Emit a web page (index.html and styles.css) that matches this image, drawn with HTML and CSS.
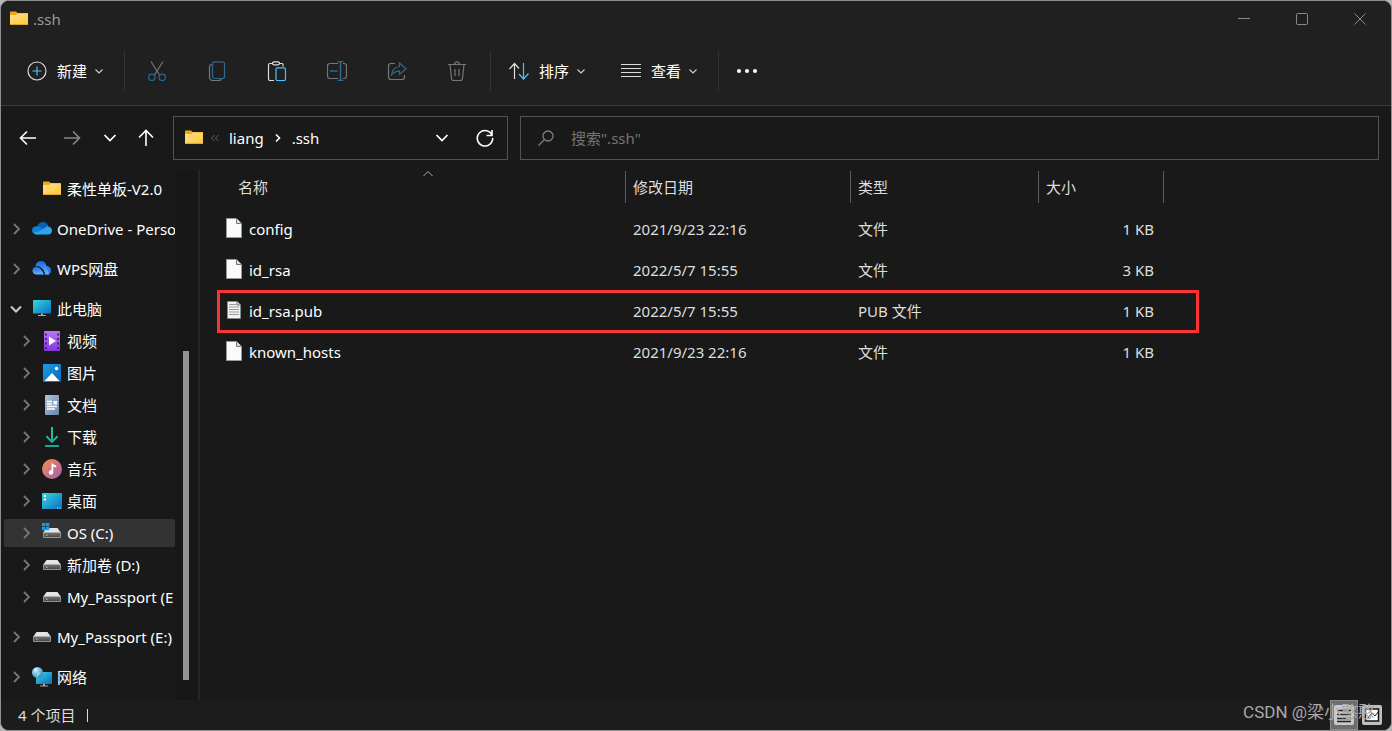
FILE: index.html
```html
<!DOCTYPE html>
<html lang="zh-CN">
<head>
<meta charset="utf-8">
<title>.ssh</title>
<link rel="stylesheet" href="styles.css">
</head>
<body>
<svg class="defs" aria-hidden="true">
  <defs>
    <linearGradient id="gFolder" x1="0" y1="0" x2="1" y2="1"><stop offset="0" stop-color="#ffe08a"/><stop offset="1" stop-color="#fbc63a"/></linearGradient>
    <linearGradient id="gScreen" x1="0" y1="0" x2="1" y2="1"><stop offset="0" stop-color="#37d6de"/><stop offset="1" stop-color="#0a6fc4"/></linearGradient>
    <linearGradient id="gVideo" x1="0" y1="0" x2="0" y2="1"><stop offset="0" stop-color="#b977f5"/><stop offset="1" stop-color="#8038dd"/></linearGradient>
    <linearGradient id="gPic" x1="0" y1="0" x2="1" y2="1"><stop offset="0" stop-color="#1c9fe8"/><stop offset="1" stop-color="#0765b8"/></linearGradient>
    <linearGradient id="gDoc" x1="0" y1="0" x2="1" y2="1"><stop offset="0" stop-color="#b4c6da"/><stop offset="1" stop-color="#6686a8"/></linearGradient>
    <linearGradient id="gMusic" x1="0" y1="0" x2="1" y2="1"><stop offset="0" stop-color="#f58f4c"/><stop offset="1" stop-color="#a55ab8"/></linearGradient>
    <linearGradient id="gDown" x1="0" y1="0" x2="0" y2="1"><stop offset="0" stop-color="#2fc48d"/><stop offset="1" stop-color="#14a89c"/></linearGradient>
    <linearGradient id="gDrive" x1="0" y1="0" x2="0" y2="1"><stop offset="0" stop-color="#777"/><stop offset="1" stop-color="#444"/></linearGradient>
    <linearGradient id="gWps" x1="0" y1="0" x2="0" y2="1"><stop offset="0" stop-color="#1266ee"/><stop offset="1" stop-color="#69b4ff"/></linearGradient>
    <radialGradient id="gGlobe" cx=".35" cy=".3" r=".8"><stop offset="0" stop-color="#c9efff"/><stop offset="1" stop-color="#2280b8"/></radialGradient>
    <symbol id="folder" viewBox="0 0 20 20"><path d="M1 3q0-.5.5-.5H7l1.500 1.500h10q.5 0 .5.500V16H1z" fill="#f0a818"/><path d="M1 6h6L8.500 4.500H19V16H1z" fill="url(#gFolder)"/><path d="M1 15.500h18" stroke="#e5a52d"/></symbol>
    <symbol id="chev" viewBox="0 0 12 12"><path d="M2.500 4.500 6 8l3.500-3.500" fill="none" stroke="currentColor" stroke-width="1.200"/></symbol>
    <symbol id="chevBig" viewBox="0 0 14 14"><path d="M1.500 4 7 9.500 12.500 4" fill="none" stroke="currentColor" stroke-width="1.700"/></symbol>
    <symbol id="right" viewBox="0 0 12 14"><path d="M4 2l5 5-5 5" fill="none" stroke="currentColor" stroke-width="1.800"/></symbol>
    <symbol id="drive" viewBox="0 0 20 20"><path d="M4.500 5h11l3.500 5H1z" fill="#e4e4e6"/><path d="M1.500 9.500h17V14.500h-17z" fill="url(#gDrive)" stroke="#aaa" stroke-width=".8"/><path d="M4 11.500h1.500v1.500H4z" fill="#3ee04a"/></symbol>
    <symbol id="file" viewBox="0 0 16 20"><path d="M.5.500h10l5 5v14H.5z" fill="#fafafa" stroke="#999"/><path d="M10.500.500v5h5" fill="#ddd" stroke="#777"/></symbol>
  </defs>
</svg>

<div class="window">
  <header class="titlebar">
    <div class="title"><svg class="i20"><use href="#folder"/></svg><span>.ssh</span></div>
    <div class="caption">
      <button aria-label="最小化"><svg class="i14" viewBox="0 0 14 14"><path d="M1 6.500h12"/></svg></button>
      <button aria-label="最大化"><svg class="i14" viewBox="0 0 14 14"><rect x="1.500" y="1.500" width="11" height="11" rx="1"/></svg></button>
      <button aria-label="关闭"><svg class="i14" viewBox="0 0 14 14"><path d="M1.500 1.500l11 11M12.500 1.500l-11 11"/></svg></button>
    </div>
  </header>

  <div class="toolbar">
    <button class="cmd"><svg class="i20" viewBox="0 0 20 20"><circle cx="10" cy="10" r="9" stroke="#ddd"/><path d="M10 5.500v9M5.500 10h9" stroke="#4cc2ff"/></svg><span>新建</span><svg class="i12"><use href="#chev"/></svg></button>
    <span class="sep"></span>
    <div class="tools">
      <button aria-label="剪切"><svg class="i20" viewBox="0 0 20 20"><path d="M4 .5l8.500 13.500M16 .5 7.500 14" stroke="#777"/><circle cx="4.800" cy="16.300" r="3.200" stroke="#2c6a8c"/><circle cx="15.200" cy="16.300" r="3.200" stroke="#2c6a8c"/></svg></button>
      <button aria-label="复制"><svg class="i20" viewBox="0 0 20 20"><path d="M5 3.500q-2.500 0-2.500 2.500v10q0 3.500 3.500 3.500h6q2 0 2.500-2" stroke="#777"/><rect x="5.500" y=".8" width="12" height="16.700" rx="2" stroke="#2c6a8c"/></svg></button>
      <button aria-label="粘贴"><svg class="i20" viewBox="0 0 20 20"><path d="M5.500 2.500H3q-1.500 0-1.500 1.500v14q0 1.500 1.500 1.500h4M12.500 2.500H15q1 0 1 1v2" stroke="#ddd"/><rect x="5.500" y=".8" width="7" height="3" rx="1.500" stroke="#ddd"/><rect x="9" y="6.800" width="9.500" height="12.700" rx="1.500" stroke="#4cc2ff"/></svg></button>
      <button aria-label="重命名"><svg class="i20" viewBox="0 0 20 20"><path d="M11 2.500H3q-2.500 0-2.500 2.500v10q0 2.500 2.500 2.500h8M16 2.500h1q2.500 0 2.500 2.500v10q0 2.500-2.500 2.500h-1" stroke="#777"/><path d="M13.500.500v19M10.500.500h6M10.500 19.500h6M3 10h7.500" stroke="#2c6a8c" stroke-width="1.500"/></svg></button>
      <button aria-label="共享"><svg class="i20" viewBox="0 0 20 20"><path d="M8 2.500H4Q1.500 2.500 1.500 5v11q0 2.500 2.500 2.500h11q2.500 0 2.500-2.500v-2" stroke="#777"/><path d="M12.500 2l6.500 5.800-6.500 5.700v-3.300q-5 0-8 3.800 .8-7.500 8-8.500z" stroke="#2c6a8c"/></svg></button>
      <button aria-label="删除"><svg class="i20" viewBox="0 0 20 20"><path d="M1 3.500h18M7.500 3.500Q8 .8 10 .8t2.500 2.700M3 3.500l1.500 14q.2 2 2 2h7q1.800 0 2-2L17 3.500M8 8v7M12 8v7" stroke="#777"/></svg></button>
    </div>
    <span class="sep"></span>
    <button class="cmd"><svg class="i20" viewBox="0 0 20 20"><path d="M5.500 18V3M.5 8l5-5.500L10 7.500" stroke="#ddd"/><path d="M14.500 2v16M10 13l4.500 5 5-5.500" stroke="#4cc2ff"/></svg><span>排序</span><svg class="i12"><use href="#chev"/></svg></button>
    <button class="cmd"><svg class="i20" viewBox="0 0 20 20"><path d="M0 3.500h20M0 7.500h20M0 11.500h20M0 15.500h20" stroke="#ddd"/></svg><span>查看</span><svg class="i12"><use href="#chev"/></svg></button>
    <span class="sep"></span>
    <button class="more" aria-label="更多"><svg class="i20" viewBox="0 0 20 20"><g fill="#fff" stroke="none"><circle cx="2" cy="10" r="2"/><circle cx="10" cy="10" r="2"/><circle cx="18" cy="10" r="2"/></g></svg></button>
  </div>

  <div class="navbar">
    <div class="arrows">
      <button aria-label="后退"><svg class="i20" viewBox="0 0 20 20"><path d="M18 10H3M9 3.500 2.500 10 9 16.500"/></svg></button>
      <button class="dim" aria-label="前进"><svg class="i20" viewBox="0 0 20 20"><path d="M2 10h15M11 3.500l6.500 6.500-6.500 6.500"/></svg></button>
      <button class="narrow" aria-label="最近浏览的位置"><svg class="i14"><use href="#chevBig"/></svg></button>
      <button class="mid" aria-label="上移"><svg class="i20" viewBox="0 0 20 20"><path d="M10 18V3M3 9.500 10 2.500l7 7"/></svg></button>
    </div>
    <div class="address">
      <svg class="i20"><use href="#folder"/></svg>
      <svg class="dbl" viewBox="0 0 10 10"><path d="M4.500 2 1.500 5l3 3M8.500 2l-3 3 3 3" stroke="#666"/></svg>
      <a href="#liang">liang</a>
      <svg class="crumb" viewBox="0 0 12 14"><path d="M4 3.500 7.500 7 4 10.500" fill="none" stroke="#fff" stroke-width="1.600"/></svg>
      <a href="#ssh">.ssh</a>
      <span class="grow"></span>
      <button aria-label="历史记录"><svg class="i14"><use href="#chevBig"/></svg></button>
      <button aria-label="刷新"><svg class="i20" viewBox="0 0 20 20"><path d="M17.200 7.500A7.700 7.700 0 1 0 17.700 10M17 2v5.500h-5.500"/></svg></button>
    </div>
    <label class="search"><svg class="i16" viewBox="0 0 16 16"><circle cx="10" cy="6" r="5"/><path d="M6.500 9.500.5 15.500"/></svg><input type="text" aria-label="搜索" placeholder='搜索".ssh"'></label>
  </div>

  <div class="body">
    <nav class="tree">
      <button class="sub"><svg class="tw"></svg><svg class="i20"><use href="#folder"/></svg><span>柔性单板-V2.0</span></button>
      <button class="gap"><svg class="tw"><use href="#right"/></svg><svg class="i20" viewBox="0 0 20 20"><path d="M5 8q1.500-5 6-5 4 0 5.500 4.500L10 12z" fill="#0a5fb4"/><path d="M4.500 15.500Q0 15 0 11.300 .5 7.500 4.500 7.300q2.500-.3 5 1.700l6 5.500z" fill="#1280d8"/><path d="M8 12l7-4.800q5 .3 5 4.500-.3 3.800-4 3.800H4.500q-2-.2-3-1.500z" fill="#2ba4ee"/></svg><span>OneDrive - Perso</span></button>
      <button class="gap"><svg class="tw"><use href="#right"/></svg><svg class="i20" viewBox="0 0 20 20"><path d="M13 7q5.500-.7 6 4.500-.3 4-4 4h-3z" fill="#2d80ea"/><path d="M3.500 7.500Q4 2 9 2q4.500 0 5.500 5l2.500 8.500h-3.500Q11 7 3.500 7.500z" fill="url(#gWps)"/><path d="M4 15.500Q.5 15 .5 11.500T5 7.500q4 .5 7 8z" fill="url(#gWps)"/><path d="M4.500 7.300q5 0 8.500 8" fill="none" stroke="#1a1a1a"/></svg><span>WPS网盘</span></button>
      <button class="gap open"><svg class="tw" viewBox="0 0 12 14"><path d="M1 4.500l5 5 5-5" fill="none" stroke="currentColor" stroke-width="2"/></svg><svg class="i20" viewBox="0 0 20 20"><rect x="1" y="1" width="18" height="13.500" rx=".5" fill="url(#gScreen)"/><path d="M9 14.500h2V16h3v1H6v-1h3z" fill="#aaa"/></svg><span>此电脑</span></button>
      <button class="sub"><svg class="tw"><use href="#right"/></svg><svg class="i20" viewBox="0 0 20 20"><rect x="2" width="16" height="20" rx="1" fill="url(#gVideo)"/><path d="M4 2.500v16M16 2.500v16" stroke="#4b2185" stroke-width="2" stroke-dasharray="2 2.500"/><path d="M7 5.500v9l7-4.500z" fill="#fff"/></svg><span>视频</span></button>
      <button class="sub"><svg class="tw"><use href="#right"/></svg><svg class="i20" viewBox="0 0 20 20"><rect x="1" y="1" width="18" height="18" rx="1" fill="url(#gPic)"/><path d="M2.500 18 10 10l7.500 8z" fill="#fff"/><circle cx="14.500" cy="5.500" r="1.700" fill="#fff"/></svg><span>图片</span></button>
      <button class="sub"><svg class="tw"><use href="#right"/></svg><svg class="i20" viewBox="0 0 20 20"><rect x="3" width="14" height="20" rx="1" fill="url(#gDoc)"/><path d="M5 6.500h5M5 9h5M5 11.500h10M5 14h8" stroke="#fff" stroke-width="1.300"/><path d="M11.500 6H15v3.500h-3.500z" fill="#fff"/></svg><span>文档</span></button>
      <button class="sub"><svg class="tw"><use href="#right"/></svg><svg class="i20" viewBox="0 0 20 20"><path d="M9 0h2v12.500l4-4 1.300 1.500-6.300 6.200L3.700 10 5 8.500l4 4zM3 18h14v2H3z" fill="url(#gDown)"/></svg><span>下载</span></button>
      <button class="sub"><svg class="tw"><use href="#right"/></svg><svg class="i20" viewBox="0 0 20 20"><circle cx="10" cy="10" r="10" fill="url(#gMusic)"/><circle cx="9" cy="13.500" r="2.200" fill="#fff"/><path d="M9.500 4.500h1.500q1 2 3.200 2v1.800q-2 0-3-.8v6H9.500z" fill="#fff"/></svg><span>音乐</span></button>
      <button class="sub"><svg class="tw"><use href="#right"/></svg><svg class="i20" viewBox="0 0 20 20"><rect y="2" width="20" height="16" rx=".7" fill="url(#gScreen)"/><path d="M2 4h2v2H2zM2 7.500h2v2H2zM15 16.500h1v1h-1zM17.500 16.500h1v1h-1z" fill="#fff"/></svg><span>桌面</span></button>
      <button class="sub selected"><svg class="tw"><use href="#right"/></svg><svg class="i20" viewBox="0 0 20 20"><use href="#drive" width="20" height="20"/><path d="M0 0h3.300v3.300H0zM4 0h3.300v3.300H4zM0 4h3.300v3.300H0zM4 4h3.300v3.300H4z" fill="#159be8"/></svg><span>OS (C:)</span></button>
      <button class="sub"><svg class="tw"><use href="#right"/></svg><svg class="i20"><use href="#drive"/></svg><span>新加卷 (D:)</span></button>
      <button class="sub"><svg class="tw"><use href="#right"/></svg><svg class="i20"><use href="#drive"/></svg><span>My_Passport (E</span></button>
      <button class="gap"><svg class="tw"><use href="#right"/></svg><svg class="i20"><use href="#drive"/></svg><span>My_Passport (E:)</span></button>
      <button class="gap"><svg class="tw"><use href="#right"/></svg><svg class="i20" viewBox="0 0 20 20"><rect x="4" y="5" width="16" height="12" fill="url(#gScreen)"/><path d="M11 17h2v1.500h3v1H8v-1h3z" fill="#aaa"/><circle cx="5.500" cy="5.500" r="5.500" fill="url(#gGlobe)"/><path d="M2 3q3 0 3-2M5 10q0-3 3-4" stroke="#fff" stroke-opacity=".6" fill="none"/></svg><span>网络</span></button>
    </nav>
    <div class="scroll"><div class="thumb"></div></div>
    <main class="files">
      <table>
        <colgroup><col class="c-name"><col class="c-date"><col class="c-type"><col class="c-size"><col class="c-end"></colgroup>
        <thead><tr>
          <th class="name"><span>名称</span><span class="sort"><svg class="i14" viewBox="0 0 14 14"><path d="M2.500 9 7 4.500 11.500 9" fill="none" stroke="#aaa"/></svg></span></th>
          <th><span>修改日期</span></th><th><span>类型</span></th><th><span>大小</span></th><th><span></span></th>
        </tr></thead>
        <tbody>
          <tr><td class="name"><div><svg class="doc"><use href="#file"/></svg>config</div></td><td>2021/9/23 22:16</td><td>文件</td><td class="size">1 KB</td><td></td></tr>
          <tr><td class="name"><div><svg class="doc"><use href="#file"/></svg>id_rsa</div></td><td>2022/5/7 15:55</td><td>文件</td><td class="size">3 KB</td><td></td></tr>
          <tr class="marked"><td class="name"><div><svg class="doc" viewBox="0 0 16 20"><path d="M1.500 1.500h9.500l3.500 3.500v13.500h-13z" fill="#f2f2f2" stroke="#888"/><path d="M11 1.500V5h3.500" fill="#ddd" stroke="#777"/><path d="M3 4.500h7M3 7h10M3 9.500h10M3 12h10M3 14.500h10" stroke="#999"/></svg>id_rsa.pub</div></td><td>2022/5/7 15:55</td><td>PUB 文件</td><td class="size">1 KB</td><td></td></tr>
          <tr><td class="name"><div><svg class="doc"><use href="#file"/></svg>known_hosts</div></td><td>2021/9/23 22:16</td><td>文件</td><td class="size">1 KB</td><td></td></tr>
        </tbody>
      </table>
    </main>
  </div>

  <footer class="status">
    <span class="count">4 个项目</span><span class="bar"></span>
    <div class="views">
      <button class="on" aria-label="详细信息"><svg class="i20" viewBox="0 0 20 20"><rect width="20" height="20" rx="2" fill="#c8c8c8"/><path d="M3 5.500h14M3 9.500h14M3 13.500h14M3 16.500h14" stroke="#222" stroke-width="1.300"/></svg></button>
      <button aria-label="大缩略图"><svg class="i20" viewBox="0 0 20 20"><rect width="20" height="20" rx="2" fill="#c0c0c0"/><rect x="3.500" y="4" width="13" height="12" fill="#fff" stroke="#111" stroke-width="1.500"/><path d="M5 14l5-6 3 3 3-4" stroke="#222" fill="none"/></svg></button>
    </div>
    <span class="watermark">CSDN @梁小憨憨</span>
  </footer>
</div>
</body>
</html>
```
FILE: styles.css
```css
* { box-sizing: border-box; }
html, body { height: 100%; }
body {
  margin: 0;
  background: #b4b7b6;
  color: #fff;
  font: 15px/20px "Noto Sans", "Noto Sans CJK SC", sans-serif;
}
button { background: none; border: 0; padding: 0; color: inherit; font: inherit; display: flex; align-items: center; justify-content: center; }
a { color: inherit; text-decoration: none; }
svg { display: block; flex: none; fill: none; }
.defs { position: absolute; width: 0; height: 0; }
.i12 { width: 12px; height: 12px; }
.i14 { width: 14px; height: 14px; }
.i16 { width: 16px; height: 16px; }
.i20 { width: 20px; height: 20px; }

.window {
  height: 100%;
  display: flex;
  flex-direction: column;
  border: 1px solid #8d8f8f;
  border-radius: 9px;
  background: #191919;
  overflow: hidden;
}

.titlebar { display: flex; justify-content: space-between; height: 36px; background: #202020; }
.title { display: flex; align-items: center; gap: 4px; padding-left: 8px; color: #9a9a9a; }
.caption { display: flex; padding-right: 2px; }
.caption button { width: 58px; }
.caption svg { stroke: #888; }

.toolbar {
  display: flex;
  align-items: center;
  height: 69px;
  padding-left: 16px;
  background: #202020;
  border-bottom: 1px solid #3a3a3a;
}
.toolbar svg { stroke-width: 1.2; }
.cmd { height: 40px; padding: 0 10px; gap: 10px; }
.cmd .i12 { margin-left: -4px; color: #ccc; }
.cmd + .cmd { margin-left: 14px; }
.sep { width: 1px; height: 40px; margin: 0 8px 0 9px; background: #333; }
.tools { display: flex; margin: 0 -6px; }
.tools button { width: 60px; height: 40px; }
.more { width: 40px; height: 40px; }

.navbar { display: flex; gap: 12px; padding: 10px 12px 10px 5px; }
.arrows { display: flex; margin-right: -5px; }
.arrows svg, .address button svg { stroke: #fff; stroke-width: 1.6; }
.arrows button { width: 44px; }
.arrows .dim svg { stroke: #888; }
.arrows .narrow { width: 32px; }
.arrows .mid { width: 40px; }
.address, .search { display: flex; align-items: center; height: 44px; border: 1px solid #535353; min-width: 0; }
.address { flex: 317 1 0; padding: 0 6px 0 10px; }
.address .dbl { width: 10px; height: 10px; margin: 0 9px 0 6px; }
.crumb { width: 12px; height: 14px; margin: 0 8px; }
.grow { flex: 1; }
.address button { width: 34px; height: 36px; }
.address button + button { width: 32px; margin-left: 10px; }
.search { flex: 840 1 0; padding-left: 17px; gap: 17px; }
.search svg { stroke: #7d7d7d; stroke-width: 1.3; }
.search input { flex: 1; min-width: 0; border: 0; padding: 0; outline: 0; background: none; color: #fff; font: inherit; }
.search input::placeholder { color: #747474; opacity: 1; }

.body { flex: 1; display: flex; min-height: 0; }
.tree { width: 174px; padding: 5px 0 0 3px; overflow: hidden; }
.tree button { width: 100%; height: 28px; margin-bottom: 4px; padding-left: 6px; justify-content: flex-start; white-space: nowrap; }
.tree .sub { padding-left: 16px; }
.tree .gap { margin-top: 12px; }
.tree .selected { background: #333; border-radius: 2px; }
.tree .i20 { margin: 0 5px 0 10px; }
.tw { width: 12px; height: 14px; color: #777; }
.open .tw { color: #ccc; }
.scroll { width: 25px; padding: 181px 0 20px 8px; border-right: 2px solid #262626; background: #171717; }
.thumb { width: 6px; height: 100%; background: #959392; }

.files { flex: 1; min-width: 0; padding-left: 18px; overflow: hidden; }
table { width: 980px; table-layout: fixed; border-collapse: collapse; color: #dedede; }
.c-name { width: 407px; }
.c-date { width: 225px; }
.c-type { width: 188px; }
.c-size { width: 125px; }
th { position: relative; height: 39px; padding: 1px 0 6px; font-weight: 400; text-align: left; }
th > span { display: flex; align-items: center; height: 32px; padding-left: 7px; border-left: 1px solid #5c5c5c; }
th.name > span { border: 0; padding-left: 20px; }
th.name .sort { position: absolute; top: -3px; left: 12px; right: 0; height: 14px; padding: 0; justify-content: center; }
td { height: 41px; padding: 0 0 1px 8px; }
td.name { color: #fff; }
td.name div { display: flex; align-items: center; gap: 7px; }
.doc { width: 16px; height: 20px; margin-bottom: 2px; }
td.size { text-align: right; padding-right: 9px; }
.marked { outline: 3px solid #fb3333; outline-offset: -2px; }

.status { position: relative; display: flex; align-items: center; height: 30px; padding: 0 5px 0 17px; background: #1c1c1c; color: #ddd; }
.bar { width: 1px; height: 13px; margin-left: 12px; background: #ddd; }
.views { display: flex; height: 100%; margin-left: auto; }
.views button { width: 28px; }
.views .on { background: #6d6d6d; border: 1px solid #888; }
.watermark { position: absolute; right: 16px; top: 0; font: 17px/24px Roboto, "Noto Sans CJK SC", sans-serif; color: #a9a9a9; }
```
